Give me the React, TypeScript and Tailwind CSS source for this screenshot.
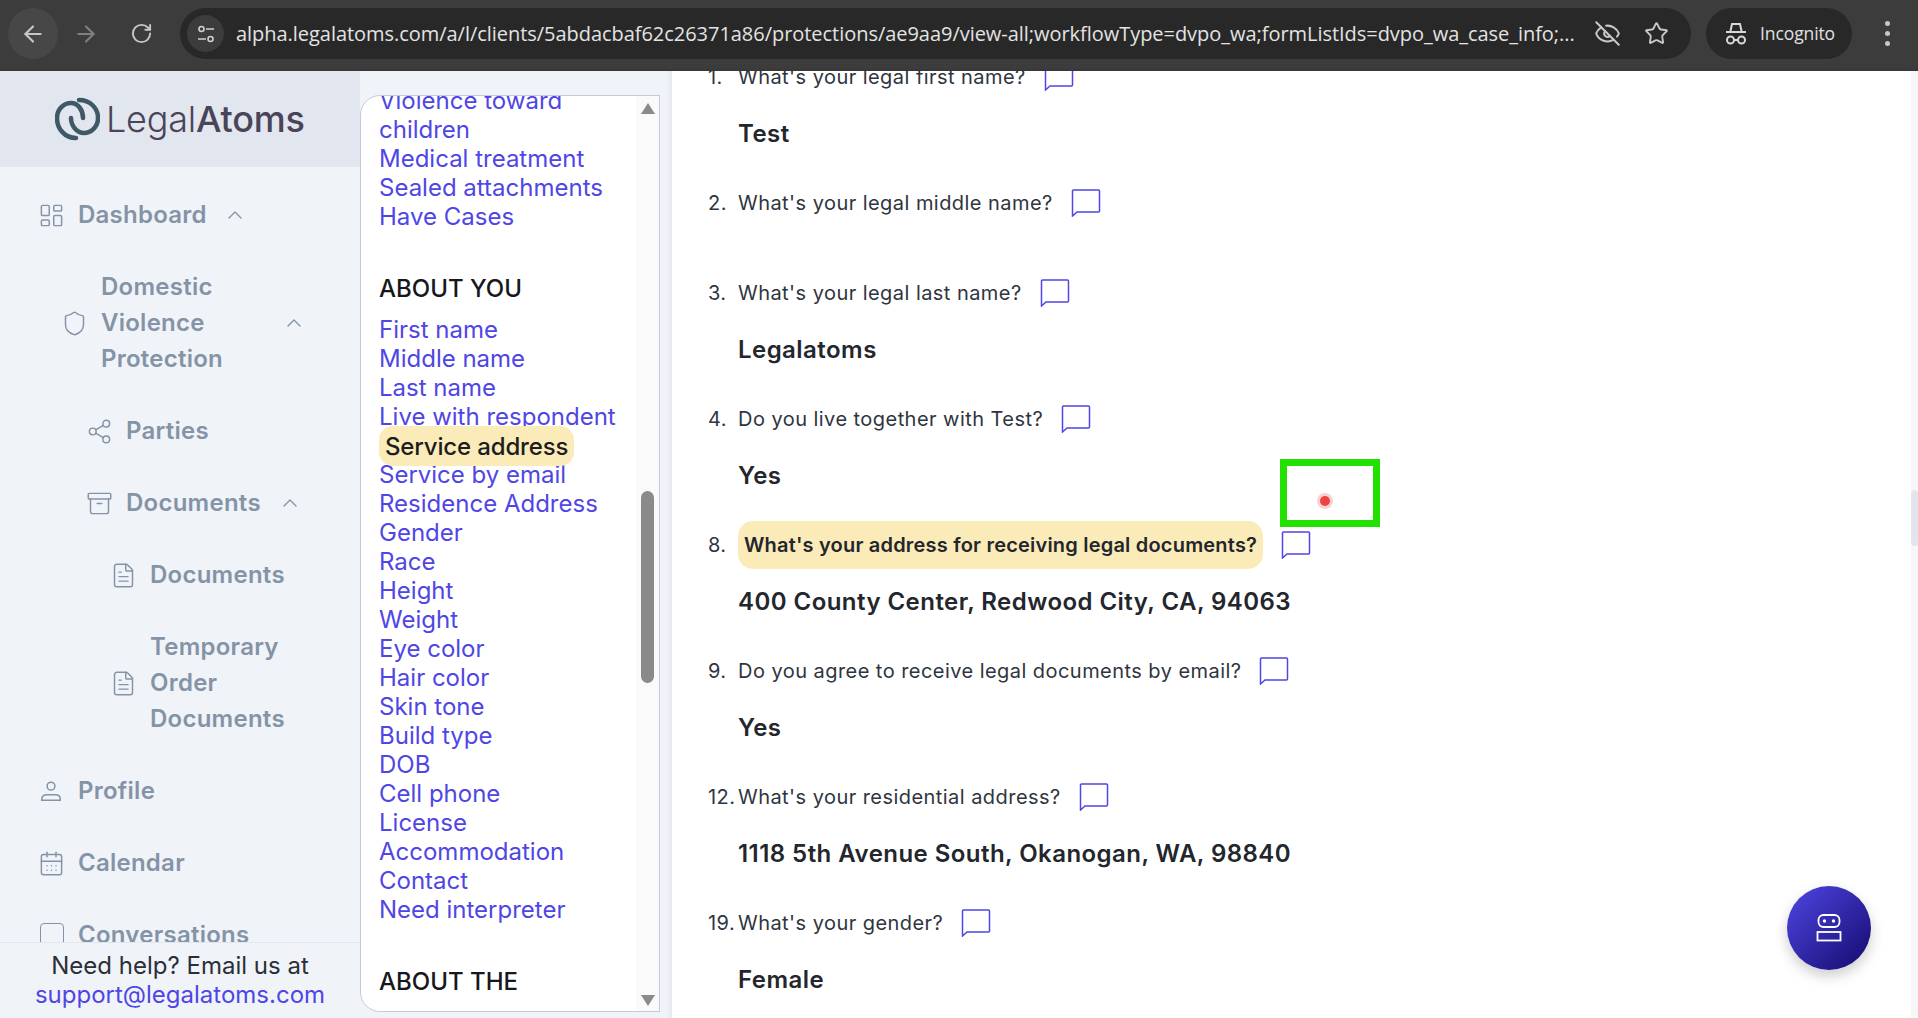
import {
  ArrowLeft,
  ArrowRight,
  Archive,
  CalendarDays,
  ChevronUp,
  EyeOff,
  FileText,
  LayoutDashboard,
  RotateCw,
  Share2,
  Shield,
  Star,
} from "lucide-react";
import type { ReactNode } from "react";

const font = "font-['Inter','Liberation_Sans',sans-serif]";

const linksTop = ["Violence toward children", "Medical treatment", "Sealed attachments", "Have Cases"];
const linksYou = [
  "First name",
  "Middle name",
  "Last name",
  "Live with respondent",
  "Service address",
  "Service by email",
  "Residence Address",
  "Gender",
  "Race",
  "Height",
  "Weight",
  "Eye color",
  "Hair color",
  "Skin tone",
  "Build type",
  "DOB",
  "Cell phone",
  "License",
  "Accommodation",
  "Contact",
  "Need interpreter",
];

const questions = [
  { n: "1.", q: "What's your legal first name?", a: "Test" },
  { n: "2.", q: "What's your legal middle name?", a: "" },
  { n: "3.", q: "What's your legal last name?", a: "Legalatoms" },
  { n: "4.", q: "Do you live together with Test?", a: "Yes" },
  { n: "8.", q: "What's your address for receiving legal documents?", a: "400 County Center, Redwood City, CA, 94063", active: true },
  { n: "9.", q: "Do you agree to receive legal documents by email?", a: "Yes" },
  { n: "12.", q: "What's your residential address?", a: "1118 5th Avenue South, Okanogan, WA, 98840" },
  { n: "19.", q: "What's your gender?", a: "Female" },
];

function PersonIcon() {
  return (
    <svg width="26" height="26" viewBox="0 0 24 24" fill="none" stroke="currentColor" strokeWidth="1.4">
      <circle cx="12" cy="7.5" r="3.6" />
      <path d="M3.5 20.5v-1.2c0-2.4 2-3.8 4.500-3.800h8c2.500 0 4.500 1.400 4.500 3.800v1.200z" />
    </svg>
  );
}

function CommentIcon() {
  return (
    <svg width="30" height="28" viewBox="0 0 30 28" fill="none" stroke="#4f46e5" strokeWidth="1.5" className="shrink-0">
      <path d="M2.500 1h25a1 1 0 0 1 1 1v20a1 1 0 0 1-1 1H6l-4.500 4V2a1 1 0 0 1 1-1z" />
    </svg>
  );
}

function NavItem({
  icon,
  label,
  chevron,
  indent = 40,
  textWidth,
}: {
  icon: ReactNode;
  label: string;
  chevron?: number;
  indent?: number;
  textWidth?: string;
}) {
  return (
    <div
      className="flex items-center py-[18px] text-[24px] leading-[36px] font-semibold tracking-[0.25px] text-[#8593a7]"
      style={{ paddingLeft: indent }}
    >
      <span className="-ml-[2px] flex w-[40px] shrink-0 items-center">{icon}</span>
      <span className={textWidth}>{label}</span>
      {chevron !== undefined && (
        <ChevronUp size={24} strokeWidth={1.4} className="shrink-0" style={{ marginLeft: chevron }} />
      )}
    </div>
  );
}

function BrowserBar() {
  return (
    <div className="flex h-[71px] shrink-0 items-center border-b-2 border-[#383838] bg-[#3c3c3c] pb-[2px] text-[#c7c7c7]">
      <div className="ml-2 flex h-[51px] w-[50px] items-center justify-center rounded-full bg-[#474747]">
        <ArrowLeft size={26} strokeWidth={2} />
      </div>
      <div className="ml-[1px] flex w-[54px] justify-center text-[#7f7f7f]">
        <ArrowRight size={26} strokeWidth={2} />
      </div>
      <div className="ml-[1px] flex w-[54px] justify-center">
        <RotateCw size={23} strokeWidth={2} />
      </div>
      <div className="ml-[12px] flex h-[51px] w-[1511px] items-center rounded-full bg-[#282828]">
        <div className="ml-[7px] flex h-[37px] w-[37px] items-center justify-center rounded-full bg-[#3c3c3c]">
          <svg width="20" height="20" viewBox="0 0 20 20" fill="none" stroke="#d0d0d0" strokeWidth="1.6">
            <circle cx="5.500" cy="5" r="2.500" />
            <path d="M10 5h8M2 15h8" />
            <circle cx="14.500" cy="15" r="2.500" />
          </svg>
        </div>
        <span className="ml-[12px] w-[1340px] truncate font-['Open_Sans',sans-serif] text-[20px] tracking-[-0.04px] text-[#e3e3e3]">
          alpha.legalatoms.com/a/l/clients/5abdacbaf62c26371a86/protections/ae9aa9/view-all;workflowType=dvpo_wa;formListIds=dvpo_wa_case_info;...
        </span>
        <EyeOff size={27} strokeWidth={1.8} className="ml-[18px]" />
        <Star size={25} strokeWidth={1.8} className="ml-[23px]" />
      </div>
      <div className="ml-[15px] flex h-[51px] w-[146px] items-center rounded-full bg-[#282828]">
        <svg width="24" height="26" viewBox="0 0 24 26" fill="none" stroke="#d8d8d8" strokeWidth="2" className="ml-[18px]">
          <path d="M6.500 10l1.500-7h8l1.500 7M2 11h20" />
          <circle cx="6.500" cy="19" r="3.500" />
          <circle cx="17.500" cy="19" r="3.500" />
          <path d="M10 19h4" />
        </svg>
        <span className="ml-[12px] font-['Open_Sans',sans-serif] text-[17.500px] tracking-[-0.1px] text-[#e0e0e0]">Incognito</span>
      </div>
      <div className="ml-[33px] flex flex-col gap-[5px]">
        <span className="h-[5px] w-[5px] rounded-full bg-[#c7c7c7]" />
        <span className="h-[5px] w-[5px] rounded-full bg-[#c7c7c7]" />
        <span className="h-[5px] w-[5px] rounded-full bg-[#c7c7c7]" />
      </div>
    </div>
  );
}

function Sidebar() {
  return (
    <aside className="flex w-[360px] shrink-0 flex-col overflow-hidden bg-[#f0f4f9]">
      <div className="flex h-[96px] shrink-0 items-center bg-[#e2e6ee] pl-[55px]">
        <svg width="45" height="44" viewBox="0 0 45 44" fill="none" stroke="#3f5a66" strokeWidth="4.500" strokeLinecap="round">
          <path d="M21 41C10 41 2 32 2 21 2 12 9 6 16 6c7 0 12 7 12 15" />
          <path d="M24 3c11 0 19 8 19 18 0 9-7 15-14 15-7 0-13-7-13-15" />
        </svg>
        <span className="ml-[6px] text-[36px] font-light tracking-[-0.2px] text-[#4a4458]">
          Legal<span className="font-medium">Atoms</span>
        </span>
      </div>
      <nav className="min-h-0 flex-1 overflow-hidden pt-3">
        <NavItem indent={40} icon={<LayoutDashboard size={27} strokeWidth={1.3} />} label="Dashboard" chevron={16} />
        <NavItem indent={63} icon={<Shield size={27} strokeWidth={1.3} />} label="Domestic Violence Protection" chevron={0} textWidth="w-[181px]" />
        <NavItem indent={88} icon={<Share2 size={27} strokeWidth={1.3} />} label="Parties" />
        <NavItem indent={88} icon={<Archive size={27} strokeWidth={1.3} />} label="Documents" chevron={17} />
        <NavItem indent={112} icon={<FileText size={27} strokeWidth={1.3} />} label="Documents" />
        <NavItem indent={112} icon={<FileText size={27} strokeWidth={1.3} />} label="Temporary Order Documents" textWidth="w-[150px]" />
        <NavItem indent={40} icon={<PersonIcon />} label="Profile" />
        <NavItem indent={40} icon={<CalendarDays size={27} strokeWidth={1.3} />} label="Calendar" />
        <NavItem indent={40} icon={<span className="ml-[2px] h-[24px] w-[24px] rounded-sm border-[1.5px] border-[#8593a7]" />} label="Conversations" />
      </nav>
      <div className="h-[76px] shrink-0 border-t border-[#e2e6ee] pt-[8px] text-center text-[24px] leading-[29px] text-[#2b2f38]">
        <div>Need help? Email us at</div>
        <div className="text-[#4f46e5]">support@legalatoms.com</div>
      </div>
    </aside>
  );
}

function Outline() {
  return (
    <div className="relative w-[312px] shrink-0 bg-[#f0f4f9] pt-[24px] pb-[6px] shadow-[inset_-6px_0_6px_-6px_#d8dce4]">
      <div className="relative h-full w-[300px] overflow-hidden rounded-tl-[20px] rounded-bl-[20px] border border-[#c8c8dc] bg-white text-[24px] leading-[29px] text-[#4f46e5]">
        <div className="-mt-[10px] pr-[36px] pl-[18px]">
          {linksTop.map((l) => (
            <div key={l}>{l}</div>
          ))}
          <div className="mt-[43px] mb-[12px] font-medium text-[#16181d]">ABOUT YOU</div>
          {linksYou.map((l) =>
            l === "Service address" ? (
              <div key={l} className="relative whitespace-nowrap">
                <span className="rounded-[14px] bg-[#fbebb8] px-[6px] py-[5.500px] font-medium tracking-[-0.15px] text-[#1c1d20]">{l}</span>
              </div>
            ) : (
              <div key={l}>{l}</div>
            ),
          )}
          <div className="mt-[43px] font-medium text-[#16181d]">ABOUT THE</div>
        </div>
        {/* scrollbar */}
        <div className="absolute top-0 right-0 bottom-0 w-[23px] bg-[#fafafa]">
          <div className="absolute top-[7px] left-[5px] h-0 w-0 border-x-[7.500px] border-b-[11px] border-x-transparent border-b-[#8a8a8a]" />
          <div className="absolute top-[395px] left-[5px] h-[192px] w-[13px] rounded-full bg-[#8a8a8a]" />
          <div className="absolute bottom-[5px] left-[5px] h-0 w-0 border-x-[7.500px] border-t-[11px] border-x-transparent border-t-[#8a8a8a]" />
        </div>
      </div>
    </div>
  );
}

function Question({ n, q, a, active }: { n: string; q: string; a: string; active?: boolean }) {
  return (
    <div>
      <div className="flex h-[48px] items-center text-[20px] tracking-[0.45px] text-[#2f3540]">
        <span className="w-[30px] shrink-0">{n}</span>
        {active ? (
          <span className="flex h-[48px] items-center rounded-[15px] bg-[#fbebb8] px-[6px] font-semibold tracking-[0.2px] text-[#23262d]">{q}</span>
        ) : (
          <span>{q}</span>
        )}
        <span className="ml-[18px] flex">
          <CommentIcon />
        </span>
      </div>
      {a ? (
        <div className="mt-[18px] mb-[31px] pl-[30px] text-[24px] leading-[29px] font-semibold tracking-[0.45px] text-[#23262d]">{a}</div>
      ) : (
        <div className="h-[42px]" />
      )}
    </div>
  );
}

export default function App() {
  return (
    <div className={`flex h-[1018px] w-[1918px] flex-col overflow-hidden bg-white ${font}`}>
      <BrowserBar />
      <div className="flex min-h-0 flex-1">
        <Sidebar />
        <Outline />
        <main className="relative min-w-0 flex-1 overflow-hidden">
          <div className="-mt-[18px] pl-[36px]">
            {questions.map((item) => (
              <Question key={item.n} {...item} />
            ))}
          </div>
          {/* recorder marker */}
          <div className="absolute top-[388px] left-[608px] h-[68px] w-[100px] border-[7px] border-[#22e000]" />
          <div className="absolute top-[422px] left-[645px] flex h-[16px] w-[16px] items-center justify-center rounded-full bg-[#fbd0d0]">
            <span className="h-[10px] w-[10px] rounded-full bg-[#ef4444]" />
          </div>
          {/* chat button */}
          <div className="absolute top-[815px] left-[1115px] flex h-[84px] w-[84px] items-center justify-center rounded-full bg-gradient-to-br from-[#4f46e5] to-[#17086f] shadow-[0_6px_14px_rgba(0,0,0,0.2)]">
            <svg width="26" height="28" viewBox="0 0 26 28" fill="none" stroke="white" strokeWidth="1.800">
              <rect x="2.500" y="1" width="21" height="12" rx="5" />
              <rect x="1.500" y="18" width="23" height="8.500" />
              <circle cx="8.500" cy="7" r="0.800" fill="white" />
              <circle cx="17.500" cy="7" r="0.800" fill="white" />
            </svg>
          </div>
          {/* page scrollbar */}
          <div className="absolute top-0 right-0 bottom-0 w-[7px] bg-[#f6f7f9]">
            <div className="absolute top-[419px] h-[56px] w-[7px] rounded-sm bg-[#e2e6ec]" />
          </div>
        </main>
      </div>
    </div>
  );
}
